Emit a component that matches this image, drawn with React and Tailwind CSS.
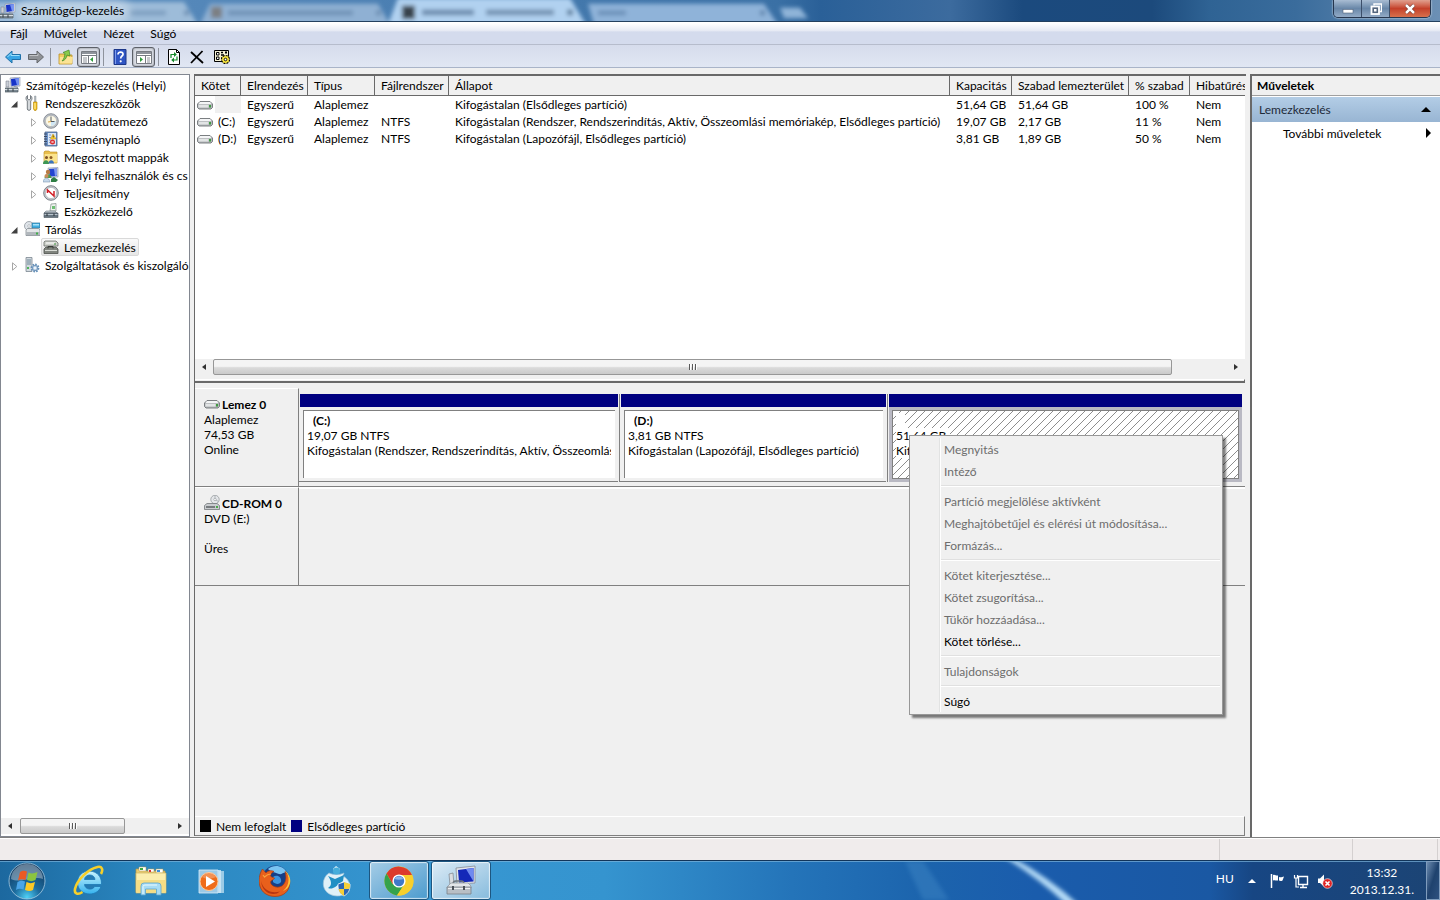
import clsx from 'clsx';

const menus = ['Fájl', 'Művelet', 'Nézet', 'Súgó'];

const tree = [
  { label: 'Számítógép-kezelés (Helyi)', level: 0, icon: ComputerIcon },
  { label: 'Rendszereszközök', level: 1, icon: ToolsIcon, state: 'open' },
  { label: 'Feladatütemező', level: 2, icon: ClockIcon, state: 'closed' },
  { label: 'Eseménynapló', level: 2, icon: EventLogIcon, state: 'closed' },
  { label: 'Megosztott mappák', level: 2, icon: SharedFolderIcon, state: 'closed' },
  { label: 'Helyi felhasználók és cs', level: 2, icon: UsersIcon, state: 'closed' },
  { label: 'Teljesítmény', level: 2, icon: PerformanceIcon, state: 'closed' },
  { label: 'Eszközkezelő', level: 2, icon: DeviceIcon },
  { label: 'Tárolás', level: 1, icon: StorageIcon, state: 'open' },
  { label: 'Lemezkezelés', level: 2, icon: DiskMgmtIcon, selected: true },
  { label: 'Szolgáltatások és kiszolgáló', level: 1, icon: ServicesIcon, state: 'closed' },
];

const columns = [
  { label: 'Kötet', width: 'w-[46px]' },
  { label: 'Elrendezés', width: 'w-[67px]' },
  { label: 'Típus', width: 'w-[67px]' },
  { label: 'Fájlrendszer', width: 'w-[74px]' },
  { label: 'Állapot', width: 'w-[501px]' },
  { label: 'Kapacitás', width: 'w-[62px]' },
  { label: 'Szabad lemezterület', width: 'w-[117px]' },
  { label: '% szabad', width: 'w-[61px]' },
  { label: 'Hibatűrés', width: '' },
];

const volumes = [
  ['', 'Egyszerű', 'Alaplemez', '', 'Kifogástalan (Elsődleges partíció)', '51,64 GB', '51,64 GB', '100 %', 'Nem'],
  ['(C:)', 'Egyszerű', 'Alaplemez', 'NTFS', 'Kifogástalan (Rendszer, Rendszerindítás, Aktív, Összeomlási memóriakép, Elsődleges partíció)', '19,07 GB', '2,17 GB', '11 %', 'Nem'],
  ['(D:)', 'Egyszerű', 'Alaplemez', 'NTFS', 'Kifogástalan (Lapozófájl, Elsődleges partíció)', '3,81 GB', '1,89 GB', '50 %', 'Nem'],
];

const contextMenu = [
  [{ label: 'Megnyitás' }, { label: 'Intéző' }],
  [
    { label: 'Partíció megjelölése aktívként' },
    { label: 'Meghajtóbetűjel és elérési út módosítása...' },
    { label: 'Formázás...' },
  ],
  [
    { label: 'Kötet kiterjesztése...' },
    { label: 'Kötet zsugorítása...' },
    { label: 'Tükör hozzáadása...' },
    { label: 'Kötet törlése...', enabled: true },
  ],
  [{ label: 'Tulajdonságok' }],
  [{ label: 'Súgó', enabled: true }],
];

const taskbarApps = [
  { name: 'Internet Explorer', icon: ExplorerLogo },
  { name: 'Windows Intéző', icon: FolderLogo },
  { name: 'Media Player', icon: MediaLogo },
  { name: 'Firefox', icon: FirefoxLogo },
  { name: 'Messenger', icon: MessengerLogo },
  { name: 'Chrome', icon: ChromeLogo, open: true },
  { name: 'Számítógép-kezelés', icon: ManagementLogo, open: true, active: true },
];

/* ---------- small icons ---------- */

function ComputerIcon() {
  return (
    <svg className="h-4 w-4 shrink-0" viewBox="0 0 16 16">
      <path d="M5 1l10-1v9l-9 1z" fill="#d8dce4" stroke="#8b94a6" strokeWidth=".6" />
      <path d="M6 2l8-1v7l-7.500 1z" fill="#1733c8" />
      <path d="M10 1.500l4-.5v7l-2 .3z" fill="#6f8df0" />
      <path d="M1 4h3v6H1z" fill="#c9ced6" stroke="#7d8590" strokeWidth=".6" />
      <path d="M0 11h13v4H0z" fill="#7d8a94" stroke="#4f5a63" strokeWidth=".7" />
      <path d="M0 12.500h13" stroke="#d5dce1" />
      <path d="M3 11.500v3M8 11.500v3" stroke="#343c42" />
      <path d="M9 9.500l4 1" stroke="#8b94a6" />
    </svg>
  );
}

function ToolsIcon() {
  return (
    <svg className="h-4 w-4 shrink-0" viewBox="0 0 16 16">
      <path d="M3.500.5v3.500l1.500 1 1.500-1V.5c2 1.200 2 4 .2 5.500v8c0 1.800-3.400 1.800-3.400 0V6C1.500 4.500 1.500 1.700 3.500.5z" fill="#d5d9dc" stroke="#6b7278" strokeWidth=".9" />
      <path d="M10.500 1h1.500v6h-1.500z" fill="#b5bcc2" stroke="#7c8388" strokeWidth=".4" />
      <path d="M9.500 7h3.500v7l-1 1.500h-1.500l-1-1.500z" fill="#f2bd19" stroke="#b48306" strokeWidth=".6" />
      <path d="M11 8v6" stroke="#fff3b0" />
    </svg>
  );
}

function ClockIcon() {
  return (
    <svg className="h-4 w-4 shrink-0" viewBox="0 0 16 16">
      <circle cx="8" cy="8" r="7.300" fill="#bcc1c8" stroke="#777d85" strokeWidth=".8" />
      <circle cx="8" cy="8" r="5.600" fill="#fbf7e4" stroke="#9ba1a8" strokeWidth=".5" />
      <path d="M8 8h5A5 5 0 0 1 8 13z" fill="#cfe6f5" />
      <path d="M8 3.500V8.500H11.500" fill="none" stroke="#555b62" />
      <path d="M8 8.500L5 9" stroke="#d9a84a" />
    </svg>
  );
}

function EventLogIcon() {
  return (
    <svg className="h-4 w-4 shrink-0" viewBox="0 0 16 16">
      <path d="M2 1h12v14H2z" fill="#6d93c9" stroke="#4b6288" strokeWidth=".8" />
      <path d="M5 2h8v12H5z" fill="#dbe6f5" />
      <path d="M6 4h2M6 6.500h2M6 9h2M6 11.500h2" stroke="#7c9ccc" />
      <path d="M1 3h3M1 5.500h3M1 8h3M1 10.500h3M1 13h3" stroke="#3b4b66" />
      <path d="M10 3l3 5H7.500z" fill="#ffd83b" stroke="#c18e05" strokeWidth=".5" />
      <path d="M10.200 4.500v2" stroke="#5d4200" />
      <circle cx="9.500" cy="11" r="2.500" fill="#dd2e32" />
      <path d="M8.500 10l2 2m0-2l-2 2" stroke="#fff" strokeWidth=".7" />
    </svg>
  );
}

function SharedFolderIcon() {
  return (
    <svg className="h-4 w-4 shrink-0" viewBox="0 0 16 16">
      <path d="M1 3l1-1h4l1 1h7v11H1z" fill="#e9bf4e" stroke="#b98b1e" strokeWidth=".6" />
      <path d="M1.500 5h12.500v8.500H1.500z" fill="#fbe38d" />
      <circle cx="3.500" cy="8.500" r="1.500" fill="#7d4f22" />
      <circle cx="8" cy="8.500" r="1.500" fill="#8b5a26" />
      <path d="M0 15c0-5 6-5 6 0z" fill="#3d9654" />
      <path d="M5.500 14.500c0-4.500 5.500-4.500 5.500 0z" fill="#3b74be" />
    </svg>
  );
}

function UsersIcon() {
  return (
    <svg className="h-4 w-4 shrink-0" viewBox="0 0 16 16">
      <path d="M5 1l10-.5V10l-9 .5z" fill="#d5dae3" stroke="#8590a5" strokeWidth=".6" />
      <path d="M6 2l8-.5V9l-7.500.5z" fill="#2445d0" />
      <path d="M11 2l3-.5v7l-2 .5z" fill="#7f98f0" />
      <circle cx="5" cy="5" r="2.200" fill="#b77a43" />
      <path d="M1.500 11c0-5 7-5 7 0z" fill="#4f9a4c" />
      <circle cx="3.500" cy="9" r="2" fill="#c98c58" />
      <path d="M0 15c0-5 7-5 7 0z" fill="#c5d8ea" stroke="#6d8aa7" strokeWidth=".5" />
      <path d="M8 12l3-2 4 3-2 2H8z" fill="#2f7e45" />
    </svg>
  );
}

function PerformanceIcon() {
  return (
    <svg className="h-4 w-4 shrink-0" viewBox="0 0 16 16">
      <circle cx="8" cy="8" r="7.300" fill="#c9cdd2" stroke="#6f767e" strokeWidth=".9" />
      <circle cx="8" cy="8" r="5.600" fill="#fff" stroke="#989ea5" strokeWidth=".5" />
      <path d="M4.500 8V5l6.500 6V6" fill="none" stroke="#d11f27" strokeWidth="1.500" />
      <path d="M5 5l5.500 5.500" stroke="#d11f27" strokeWidth=".8" />
    </svg>
  );
}

function DeviceIcon() {
  return (
    <svg className="h-4 w-4 shrink-0" viewBox="0 0 16 16">
      <path d="M8 1l5-.5V8H7z" fill="#eef2ee" stroke="#7e8d86" strokeWidth=".7" />
      <path d="M9 3h3v3H9z" fill="#6fbf74" />
      <path d="M3 8h9l2 2H1z" fill="#c4ccd3" stroke="#6f7982" strokeWidth=".6" />
      <path d="M1 10h14v4.500H1z" fill="#66747f" stroke="#46525b" strokeWidth=".6" />
      <path d="M1.500 11.500h13" stroke="#b9c4cc" />
      <path d="M4 10.500v2.500M11 10.500v2.500" stroke="#272f35" />
    </svg>
  );
}

function StorageIcon() {
  return (
    <svg className="h-4 w-4 shrink-0" viewBox="0 0 16 16">
      <circle cx="5" cy="5" r="4.500" fill="#dfe4e9" stroke="#828a92" strokeWidth=".7" />
      <circle cx="5" cy="5" r="1.300" fill="#fff" stroke="#8b939b" strokeWidth=".5" />
      <path d="M8 2h8v5H8z" fill="#42aee0" stroke="#29749b" strokeWidth=".7" />
      <path d="M9 3h6v1.500H9z" fill="#a7e2fa" />
      <path d="M2 9l1.500-1.500h11L16 9v5.500H2z" fill="#e3e6e8" stroke="#767e85" strokeWidth=".7" />
      <path d="M2 11h14v3H2z" fill="#b1b7bc" />
      <path d="M12 11.500h2v2h-2z" fill="#3fae49" />
    </svg>
  );
}

function DiskMgmtIcon() {
  return (
    <svg className="h-4 w-4 shrink-0" viewBox="0 0 16 16">
      <path d="M2 2h11l2 2v3H1V3z" fill="#cfd2cc" stroke="#6b6f69" strokeWidth=".8" />
      <path d="M3 4h9" stroke="#fff" />
      <path d="M11 5h2" stroke="#3d8f3d" />
      <path d="M3 8h10l2 2v4.500H1V10z" fill="#80847e" stroke="#4c504b" strokeWidth=".8" />
      <path d="M2 11.500h12" stroke="#d9dcd6" />
      <path d="M5 9.500v-2h5v2" fill="none" stroke="#393c38" />
    </svg>
  );
}

function ServicesIcon() {
  return (
    <svg className="h-4 w-4 shrink-0" viewBox="0 0 16 16">
      <path d="M2 .5h6v14H2z" fill="#d3dae0" stroke="#7b8790" strokeWidth=".8" />
      <path d="M3 3h4M3 5h4M3 7h4" stroke="#6d8797" />
      <path d="M3 10h2v2H3z" fill="#4fb35b" />
      <circle cx="11" cy="11" r="3.500" fill="#dbe8f4" stroke="#6590b8" strokeWidth="1.800" strokeDasharray="1.600 1.100" />
      <circle cx="11" cy="11" r="2.700" fill="#b9d0e6" stroke="#5a83aa" strokeWidth=".7" />
      <circle cx="11" cy="11" r="1" fill="#fff" />
    </svg>
  );
}

function DriveIcon() {
  return (
    <svg className="h-4 w-4 shrink-0" viewBox="0 0 16 16">
      <path d="M3 4.500h10l2.500 2.500v3.500L14 12H2L.5 10.500V7z" fill="#b4b7ba" stroke="#707477" strokeWidth=".9" />
      <path d="M3 5h10l1.500 2h-13z" fill="#f4f5f6" />
      <path d="M1.500 7.800h10v2.700h-10z" fill="#e2e4e5" />
      <path d="M12 8h2v2.500h-2z" fill="#3f9a40" />
    </svg>
  );
}

function CdDriveIcon() {
  return (
    <svg className="h-4 w-4 shrink-0" viewBox="0 0 16 16">
      <circle cx="11" cy="4.500" r="4.200" fill="#e5e7ea" stroke="#8b9094" strokeWidth=".7" />
      <circle cx="11" cy="4.500" r="1.200" fill="#fff" stroke="#8b9094" strokeWidth=".6" />
      <path d="M11 .5v3M12 5l3 2" stroke="#aeb4b8" />
      <path d="M3 8.500h10l2.500 2v4H.5v-4z" fill="#c9cccf" stroke="#74787b" strokeWidth=".8" />
      <path d="M2 12h9" stroke="#5d6265" strokeWidth="1.500" />
      <path d="M12 11h2v2h-2z" fill="#49a84a" />
    </svg>
  );
}

function Triangle({ dir, className }) {
  const points = {
    left: '6,1 6,9 2,5',
    right: '3,0 3,10 8,5',
    up: '0,7 10,7 5,2',
  };
  return (
    <svg className={clsx('h-[10px] w-[10px] shrink-0', className)} viewBox="0 0 10 10">
      <polygon points={points[dir]} fill="currentColor" />
    </svg>
  );
}

function ScrollArrow({ dir }) {
  return (
    <svg className="h-[10px] w-[10px]" viewBox="0 0 10 10">
      <polygon points={dir === 'left' ? '7,2 7,8 3,5' : '3,2 3,8 7,5'} fill="#303030" />
    </svg>
  );
}

/* ---------- title bar ---------- */

function CaptionButtons() {
  return (
    <div className="mr-[9px] flex h-[18px] overflow-hidden rounded-b-[5px] border border-t-0 border-[#26364e] shadow-[0_0_2px_#ffffff]">
      <button aria-label="Kis méret" className="flex w-7 items-center justify-center border-r border-[#3c4f6a] bg-linear-to-b from-[#a9bdd3] via-[#6987a8] to-[#93abc6]">
        <svg className="h-3 w-3" viewBox="0 0 12 12">
          <rect x="1" y="6.500" width="10" height="3.500" fill="#fff" stroke="#53657d" strokeWidth=".6" />
        </svg>
      </button>
      <button aria-label="Előző méret" className="flex w-7 items-center justify-center border-r border-[#3c4f6a] bg-linear-to-b from-[#a9bdd3] via-[#6987a8] to-[#93abc6]">
        <svg className="h-3 w-3" viewBox="0 0 12 12">
          <path d="M4 2.500V1h7.500v7.500H10" fill="none" stroke="#fff" strokeWidth="1.400" />
          <rect x="1.500" y="3.500" width="7.500" height="7.500" fill="#53657d" stroke="#fff" strokeWidth="1.800" />
          <rect x="4" y="6" width="2.500" height="2.500" fill="#fff" />
        </svg>
      </button>
      <button aria-label="Bezárás" className="flex w-10 items-center justify-center bg-linear-to-b from-[#e0a08f] via-[#c4402a] to-[#d8704c]">
        <svg className="h-3 w-3" viewBox="0 0 12 12">
          <path d="M2 2l8 8M10 2l-8 8" stroke="#5c2018" strokeWidth="3.600" />
          <path d="M2 2l8 8M10 2l-8 8" stroke="#fff" strokeWidth="2.600" />
        </svg>
      </button>
    </div>
  );
}

function GlassBackdrop() {
  return (
    <svg className="absolute inset-0 h-full w-full" viewBox="0 0 1440 22" preserveAspectRatio="none">
      <defs>
        <linearGradient id="sky" x1="0" x2="1" y1="0" y2="0">
          <stop offset="0" stopColor="#5d8fc0" />
          <stop offset=".54" stopColor="#3a70a5" />
          <stop offset=".57" stopColor="#2a6098" />
          <stop offset=".66" stopColor="#3c6b9e" />
          <stop offset=".71" stopColor="#1b4a7e" />
          <stop offset=".8" stopColor="#1c4a7c" />
          <stop offset=".84" stopColor="#2f6394" />
          <stop offset=".9" stopColor="#3a6c9c" />
          <stop offset="1" stopColor="#6c90b5" />
        </linearGradient>
        <filter id="haze" x="-5%" y="-50%" width="110%" height="200%">
          <feGaussianBlur stdDeviation="2" />
        </filter>
      </defs>
      <rect width="1440" height="22" fill="url(#sky)" />
      <g filter="url(#haze)">
        <path d="M-10 2H184l14 24H-10z" fill="#9dbcd9" />
        <path d="M210 4h168l12 22H200z" fill="#8fb0d3" />
        <path d="M398-2h172l16 28H388z" fill="#b1d1f0" />
        <path d="M588 4h176l14 22H594z" fill="#8fb3d9" />
        <path d="M780 8h20l8 11h-24z" fill="#8fb4d8" />
        <rect x="211" y="7" width="11" height="12" fill="#7c7f83" />
        <rect x="402" y="6" width="13" height="14" fill="#38424c" />
        <rect x="130" y="11" width="36" height="5" fill="#7d9dbf" />
        <rect x="228" y="11" width="125" height="5" fill="#6f91b5" />
        <rect x="422" y="10" width="52" height="6" fill="#6d8cad" />
        <rect x="486" y="10" width="68" height="6" fill="#7593b2" />
        <rect x="598" y="11" width="28" height="5" fill="#6c90b8" />
        <rect x="184" y="11" width="5" height="5" fill="#6a8cb0" />
        <rect x="376" y="11" width="5" height="5" fill="#6a8cb0" />
        <rect x="567" y="10" width="6" height="6" fill="#5f7f9f" />
        <rect x="760" y="11" width="5" height="5" fill="#5f83ab" />
      </g>
    </svg>
  );
}

function TitleBar() {
  return (
    <header className="relative flex h-[22px] shrink-0 items-start justify-between overflow-hidden border-b border-[#23405f]">
      <GlassBackdrop />
      <div className="relative flex items-center gap-[5px] pt-[2px]">
        <ComputerIcon />
        <h1 className="rounded-full bg-white/30 shadow-[0_0_8px_6px_rgba(255,255,255,0.3)]">Számítógép-kezelés</h1>
      </div>
      <div className="relative">
        <CaptionButtons />
      </div>
    </header>
  );
}

/* ---------- menu and toolbar ---------- */

function MenuBar() {
  return (
    <nav className="flex h-[23px] shrink-0 items-center gap-1 border-b border-[#b6bccc] bg-linear-to-b from-white from-5% via-[#e6eaf4] via-40% to-[#d4dbed] to-45% pl-1">
      {menus.map((menu) => (
        <button key={menu} className="px-[6px]">
          {menu}
        </button>
      ))}
    </nav>
  );
}

function ToolButton({ label, pressed, children }) {
  return (
    <button
      aria-label={label}
      className={clsx(
        'flex h-5 w-[23px] items-center justify-center',
        pressed && 'rounded-[3px] border border-[#5d6169] bg-[#d9dce4] shadow-[inset_0_0_2px_#6b7078]'
      )}
    >
      {children}
    </button>
  );
}

function ToolSeparator() {
  return <div className="mx-[3px] h-[18px] w-px bg-[#8e939d]" />;
}

function Toolbar() {
  return (
    <div className="flex h-[23px] shrink-0 items-center border-b border-[#a9b4c8] bg-linear-to-b from-[#d6dcec] to-[#e1e7f3] pt-px pl-px">
      <ToolButton label="Vissza">
        <svg className="h-4 w-4" viewBox="0 0 16 16">
          <path d="M.5 8L7 2v3.500h8.500v5H7V14z" fill="#39a5e4" stroke="#2070a8" />
          <path d="M2.500 8L6 4.500v2h8.500" fill="none" stroke="#9be0fb" />
        </svg>
      </ToolButton>
      <ToolButton label="Előre">
        <svg className="h-4 w-4" viewBox="0 0 16 16">
          <path d="M15.500 8L9 2v3.500H.5v5H9V14z" fill="#8f9296" stroke="#64676b" />
          <path d="M1.500 6.500H10v-2" fill="none" stroke="#c2c4c7" />
        </svg>
      </ToolButton>
      <ToolSeparator />
      <ToolButton label="Fel egy szinttel">
        <svg className="h-4 w-4" viewBox="0 0 16 16">
          <path d="M1 5h5l1 1h7v9H1z" fill="#f3cd63" stroke="#b98f27" strokeWidth=".8" />
          <path d="M2 8h13l-1 6.500H1.500z" fill="#fbe396" />
          <path d="M4 12c3-.5 4.500-3 5-6L12 7l-1-6-6 2.500 2 1C6.500 8 6 10 4 12z" fill="#8acb4c" stroke="#3f8a24" strokeWidth=".7" />
        </svg>
      </ToolButton>
      <ToolButton label="Konzolfa megjelenítése" pressed>
        <svg className="h-4 w-4" viewBox="0 0 16 16">
          <path d="M.5 2.500h15v12H.5z" fill="#fff" stroke="#777b82" />
          <path d="M1 4h14" stroke="#8e939b" strokeWidth="2" />
          <path d="M1 6.500h14M7.500 7v7" stroke="#777b82" />
          <path d="M2 9h4M2 11h4M2 13h4" stroke="#8e939b" />
          <path d="M12 8v5L9 10.500z" fill="#2f9a3c" />
        </svg>
      </ToolButton>
      <ToolSeparator />
      <div className="w-px" />
      <ToolButton label="Súgó">
        <svg className="h-4 w-4" viewBox="0 0 16 16">
          <path d="M2 .5h12v15H2z" fill="#2f55c4" stroke="#1c3789" />
          <path d="M3.500 1v14" stroke="#7d9bea" />
          <path d="M6 5.500c0-3.500 5.500-3 5 0-.3 1.700-2.300 1.500-2.300 4" fill="none" stroke="#fff" strokeWidth="1.700" />
          <circle cx="8.700" cy="12.300" r="1.100" fill="#fff" />
        </svg>
      </ToolButton>
      <div className="w-px" />
      <ToolButton label="Műveletek ablaktábla" pressed>
        <svg className="h-4 w-4" viewBox="0 0 16 16">
          <path d="M.5 2.500h15v12H.5z" fill="#fff" stroke="#777b82" />
          <path d="M1 4h14" stroke="#8e939b" strokeWidth="2" />
          <path d="M1 6.500h14M9.500 7v7" stroke="#777b82" />
          <path d="M11 9h3M11 11h3M11 13h3" stroke="#8e939b" />
          <path d="M4 8v5l3-2.500z" fill="#2f9a3c" />
        </svg>
      </ToolButton>
      <ToolSeparator />
      <ToolButton label="Frissítés">
        <svg className="h-4 w-4" viewBox="0 0 16 16">
          <path d="M2.500.5h8l3 3v12h-11z" fill="#fff" stroke="#000" />
          <path d="M10.500.5v3h3" fill="none" stroke="#000" />
          <path d="M5 9V5.500h4M11 7.500V11H7" fill="none" stroke="#178a2b" strokeWidth="1.200" />
          <path d="M8 3v5l2.800-2.500zM8 8.500v5L5.200 11z" fill="#178a2b" />
        </svg>
      </ToolButton>
      <ToolButton label="Törlés">
        <svg className="h-4 w-4" viewBox="0 0 16 16">
          <path d="M2 3l12 11" stroke="#000" strokeWidth="1.800" />
          <path d="M13.500 2L2 14" stroke="#000" strokeWidth="1.800" />
        </svg>
      </ToolButton>
      <ToolButton label="Tulajdonságok">
        <svg className="ml-1 h-4 w-4" viewBox="0 0 16 16">
          <path d="M.5 1.500h14v11H.5z" fill="#f4f1d5" stroke="#000" />
          <path d="M2.500 3.500h2.500v2.500h-2.500zM2.500 8h2.500v2.500h-2.500z" fill="#fff" stroke="#000" />
          <path d="M7 3.500h2M7 6h3M7 9h2" stroke="#000" strokeWidth="1.500" />
          <path d="M11 3.500h2" stroke="#000" strokeWidth="2" />
          <circle cx="11.500" cy="10.500" r="4" fill="#f5e23c" stroke="#000" strokeWidth="1.200" strokeDasharray="2 1.100" />
          <circle cx="11.500" cy="10.500" r="3" fill="#f5e23c" />
          <circle cx="11.500" cy="10.500" r="1.300" fill="#fff" stroke="#000" strokeWidth=".9" />
        </svg>
      </ToolButton>
    </div>
  );
}

/* ---------- panes ---------- */

function ScrollBar({ thumb }) {
  return (
    <div className="flex h-4 shrink-0 items-center bg-[#f0f0f0]">
      <button aria-label="Görgetés balra" className="flex w-[18px] justify-center">
        <ScrollArrow dir="left" />
      </button>
      <div className="flex-1">
        <div className={clsx('flex h-4 items-center justify-center gap-px rounded-[2px] border border-[#979797] bg-linear-to-b from-[#f4f4f4] from-45% via-[#dadada] via-55% to-[#cacaca]', thumb)}>
          <span className="h-[6px] w-[2px] border-r border-white bg-[#5a5a5a]" />
          <span className="h-[6px] w-[2px] border-r border-white bg-[#5a5a5a]" />
          <span className="h-[6px] w-[2px] border-r border-white bg-[#5a5a5a]" />
        </div>
      </div>
      <button aria-label="Görgetés jobbra" className="flex w-[18px] justify-center">
        <ScrollArrow dir="right" />
      </button>
    </div>
  );
}

function TreeItem({ item }) {
  const Icon = item.icon;
  return (
    <li className={clsx('flex h-[18px] items-center', item.level === 0 && 'pl-[2px]', item.level === 1 && 'pl-[7px]', item.level === 2 && 'pl-[26px]')}>
      {item.level > 0 && (
        <span className="mr-[2px] flex w-3 shrink-0 justify-center">
          {item.state && (
            <svg className="mt-[2px] h-[9px] w-[7px]" viewBox="0 0 7 9">
              {item.state === 'open' ? (
                <path d="M6.500 1v6.500H0z" fill="#404040" />
              ) : (
                <path d="M1.500 .8l4.300 3.700-4.300 3.700z" fill="#fff" stroke="#a6a6a6" />
              )}
            </svg>
          )}
        </span>
      )}
      <button
        className={clsx(
          'flex h-[18px] items-center gap-[5px] rounded-[2px] border pr-[2px] pl-px whitespace-nowrap',
          item.selected ? 'border-[#d9d9d9] bg-linear-to-b from-[#fafafa] to-[#e6e6e6]' : 'border-transparent'
        )}
      >
        <Icon />
        {item.label}
      </button>
    </li>
  );
}

function TreePane() {
  return (
    <aside className="flex w-[190px] shrink-0 flex-col border border-[#828790] bg-white pb-[2px]">
      <ul className="flex-1 overflow-hidden pt-px">
        {tree.map((item) => (
          <TreeItem key={item.label} item={item} />
        ))}
      </ul>
      <ScrollBar thumb="w-[105px] ml-px" />
    </aside>
  );
}

function VolumeList() {
  return (
    <div className="flex h-[283px] shrink-0 flex-col overflow-hidden bg-white">
      <table className="w-full table-fixed border-separate border-spacing-0 text-left whitespace-nowrap">
        <thead>
          <tr className="h-5">
            {columns.map((col) => (
              <th
                key={col.label}
                scope="col"
                className={clsx('overflow-hidden border-r border-b border-[#696969] bg-[#f0f0f0] p-0 pl-[6px] font-normal last:border-r-0', col.width)}
              >
                {col.label}
              </th>
            ))}
          </tr>
        </thead>
        <tbody>
          {volumes.map((row, idx) => (
            <tr key={idx} className="h-[17px]">
              {row.map((cell, i) =>
                i === 0 ? (
                  <td key={i} className="p-0">
                    <span className="flex h-[17px] items-center pl-[2px]">
                      <DriveIcon />
                      <span className={clsx('ml-[2px] h-[17px] flex-1 pl-[3px]', !cell && 'bg-[#f0f0f0]')}>{cell}</span>
                    </span>
                  </td>
                ) : (
                  <td key={i} className="overflow-hidden p-0 pl-[6px]">
                    {cell}
                  </td>
                )
              )}
            </tr>
          ))}
        </tbody>
      </table>
    </div>
  );
}

function DiskLabel({ icon: Icon, name, lines }) {
  return (
    <div className="w-[104px] shrink-0 border-t border-r border-t-white border-r-[#808080] pt-[7px] pl-[9px] leading-[15px]">
      <h2 className="flex h-4 items-center gap-[2px] font-bold whitespace-nowrap">
        <Icon />
        {name}
      </h2>
      {lines.map((line, i) => (
        <p key={i} className="h-[15px]">
          {line}
        </p>
      ))}
    </div>
  );
}

function Partition({ name, size, status }) {
  return (
    <div className="flex min-w-0 flex-col border-r border-[#808080] pr-px">
      <div className="ml-px h-[13px] bg-[#000080]" />
      <div className="flex-1 border-b border-[#808080] p-[3px] pl-1">
        <div className="h-full overflow-hidden border-t border-l border-[#808080] bg-white pt-[2px] pl-[3px] leading-[15px] whitespace-nowrap">
          <p className="pl-[6px] font-bold">{name}</p>
          <p>{size}</p>
          <p className="mr-1 overflow-hidden">{status}</p>
        </div>
      </div>
    </div>
  );
}

function SelectedPartition() {
  return (
    <div className="relative flex min-w-0 flex-col">
      <div className="ml-px h-[13px] bg-[#000080]" />
      <div className="ml-px flex-1 bg-[#b9b9c3] p-[3px]">
        <div className="relative h-full overflow-hidden border border-[#808080] bg-white pt-[2px] pl-[3px] leading-[15px] whitespace-nowrap">
          <svg className="absolute inset-0 h-full w-full">
            <defs>
              <pattern id="hatch" width="8" height="8" patternUnits="userSpaceOnUse">
                <path d="M-1 9L9 -1M-1 1L1 -1M7 9L9 7" stroke="#707070" strokeWidth=".8" />
              </pattern>
            </defs>
            <rect width="100%" height="100%" fill="url(#hatch)" />
          </svg>
          <p className="relative h-[15px] w-[9px] bg-white" />
          <p className="relative w-fit bg-white pr-1">51,64 GB</p>
          <p className="relative w-fit bg-white">Kifogástalan (Elsődleges partíció)</p>
        </div>
      </div>
      <ContextMenu />
    </div>
  );
}

function ContextMenu() {
  return (
    <div role="menu" className="absolute top-[41px] left-[21px] z-10 w-[314px] border border-[#979797] bg-[#f0f0f0] p-[2px] shadow-[3px_3px_2px_rgba(0,0,0,0.5)]">
      <div className="relative">
        <div className="absolute inset-y-0 left-[27px] w-[2px] border-l border-[#e2e3e3] bg-white" />
        {contextMenu.map((group, i) => (
          <div key={i}>
            {i > 0 && <div className="my-[3px] ml-7 h-[2px] border-t border-[#e0e0e0] bg-white" />}
            {group.map((item) => (
              <button
                key={item.label}
                role="menuitem"
                disabled={!item.enabled}
                className={clsx('relative block h-[22px] w-full pl-8 text-left', item.enabled ? 'text-black' : 'text-[#6d6d6d]')}
              >
                {item.label}
              </button>
            ))}
          </div>
        ))}
      </div>
    </div>
  );
}

function DiskView() {
  return (
    <div className="flex flex-1 flex-col bg-[#f0f0f0]">
      <div className="mt-[5px] flex h-[99px] border-b border-[#808080]">
        <DiskLabel icon={DriveIcon} name="Lemez 0" lines={['Alaplemez', '74,53 GB', 'Online']} />
        <div className="grid min-w-0 flex-1 grid-cols-[321fr_268fr_354fr] pt-[6px] pr-[3px] pb-1">
          <Partition name="(C:)" size="19,07 GB NTFS" status="Kifogástalan (Rendszer, Rendszerindítás, Aktív, Összeomlás" />
          <Partition name="(D:)" size="3,81 GB NTFS" status="Kifogástalan (Lapozófájl, Elsődleges partíció)" />
          <SelectedPartition />
        </div>
      </div>
      <div className="flex h-[99px] border-b border-[#808080]">
        <DiskLabel icon={CdDriveIcon} name="CD-ROM 0" lines={['DVD (E:)', '', 'Üres']} />
        <div className="flex-1 border-t-2 border-white" />
      </div>
      <div className="mt-auto flex h-5 items-center gap-[5px] border-t border-r border-b border-t-white border-r-[#808080] border-b-[#808080] pl-[5px]">
        <span className="h-3 w-[11px] bg-black" />
        <span>Nem lefoglalt</span>
        <span className="h-3 w-[11px] bg-[#000080]" />
        <span>Elsődleges partíció</span>
      </div>
    </div>
  );
}

function ActionsPane() {
  return (
    <aside className="w-[190px] shrink-0 border-t-2 border-l-2 border-[#696969] bg-white">
      <h2 className="flex h-5 items-center border-b border-[#a0a0a0] bg-[#f0f0f0] pl-[5px] font-bold">Műveletek</h2>
      <button className="mt-px flex h-[25px] w-full items-center justify-between bg-linear-to-b from-[#b3cde6] to-[#98b5d3] pr-[9px] pl-[7px] text-[#1e2a3a]">
        Lemezkezelés
        <Triangle dir="up" className="text-black" />
      </button>
      <button className="mt-[2px] flex h-[18px] w-full items-center justify-between pr-[7px] pl-[31px]">
        További műveletek
        <Triangle dir="right" className="text-black" />
      </button>
    </aside>
  );
}

/* ---------- taskbar ---------- */

function StartOrb() {
  return (
    <svg className="h-[38px] w-[38px]" viewBox="0 0 38 38">
      <defs>
        <radialGradient id="orb" cx=".5" cy=".95" r=".9">
          <stop offset="0" stopColor="#4fd0f5" />
          <stop offset=".4" stopColor="#1c6c9f" />
          <stop offset="1" stopColor="#12395f" />
        </radialGradient>
      </defs>
      <circle cx="19" cy="19" r="18" fill="url(#orb)" stroke="#a8cbe2" strokeWidth=".8" />
      <path d="M3 17a16 15 0 0 1 32 0c-9-4-23 5-32 0z" fill="#fff" opacity=".35" />
      <path d="M12 10c3-2 4.500-1.500 7-.5L17.500 18c-3-1-5-1-7.500.5z" fill="#ea5a24" />
      <path d="M20.500 10.500c3 1.500 5.500 1 9-.5L27.500 18c-3 1.500-5.500 1.500-8.500 0z" fill="#8bc53f" />
      <path d="M9.500 20c3-1.500 5-1.500 7.500-.5L15.500 27.500c-3-1-5-1-7.500.5z" fill="#4aa5e8" />
      <path d="M18.500 20c3 1.500 5.500 1.500 8.500 0L25 28c-3 1.500-5 1-8 0z" fill="#fcc926" />
    </svg>
  );
}

function ExplorerLogo() {
  return (
    <svg className="h-8 w-8" viewBox="0 0 32 32">
      <defs>
        <linearGradient id="ie" x1="0" y1="0" x2="0" y2="1">
          <stop offset="0" stopColor="#c8f4ff" />
          <stop offset="1" stopColor="#35b2ee" />
        </linearGradient>
      </defs>
      <path d="M28.500 19.500H11.500c.5 5.500 8.500 6 10 2h6.500C24 33 4.500 31 4.500 17.500 4.500 2 29.500 2 28.500 19.500zM11.500 14.500h10.500c-.5-6-10-6-10.500 0z" fill="url(#ie)" fillRule="evenodd" stroke="#1d78b5" strokeWidth=".8" />
      <path d="M28 9c2.500-4.500 1-8-3.500-7C15 4 4 15 2 24c-1 6 4 5.500 7.500 3" fill="none" stroke="#f6cf2a" strokeWidth="2.600" />
    </svg>
  );
}

function FolderLogo() {
  return (
    <svg className="h-8 w-8" viewBox="0 0 32 32">
      <path d="M1 4h8l2 2h19v21H1z" fill="#e8cd75" stroke="#b69a45" strokeWidth=".7" />
      <path d="M4 2h7v4H4z" fill="#fff" stroke="#b69a45" strokeWidth=".5" />
      <path d="M5 3h3v2H5z" fill="#3da83d" />
      <path d="M13 4h6v3h-6zM21 4h7v4h-7z" fill="#fff" stroke="#b69a45" strokeWidth=".5" />
      <path d="M14 5h2v2h-2z" fill="#d33" />
      <path d="M22 5h3v2h-3z" fill="#3d8fd8" />
      <path d="M1 8h30v20H1z" fill="#fbeeae" stroke="#ceb562" strokeWidth=".7" />
      <path d="M1.500 15h29v12.500h-29z" fill="#f5dd84" />
      <path d="M6 30V21q0-3 3-3h14q3 0 3 3v9h-4.500v-6h-11v6z" fill="#a7dcf5" stroke="#5ba4cf" strokeWidth=".8" />
      <path d="M8 29V21.500q0-1.500 2-1.500h12" fill="none" stroke="#e9f9ff" />
    </svg>
  );
}

function MediaLogo() {
  return (
    <svg className="h-8 w-8" viewBox="0 0 32 32">
      <path d="M22 6h5v22h-5z" fill="#b8dbef" opacity=".8" />
      <path d="M19 5h5v23h-5z" fill="#d2e9f6" opacity=".8" />
      <path d="M2 5h19v23H2z" fill="#9bc9e6" stroke="#d9eef9" strokeWidth=".8" />
      <circle cx="12" cy="16.500" r="9" fill="#ef6c1a" stroke="#ffc896" />
      <path d="M5 12c4-6 11-6 14 0-5 2-9 3-14 0z" fill="#fff" opacity=".25" />
      <path d="M9 11l9 5.500L9 22z" fill="#fff" />
    </svg>
  );
}

function FirefoxLogo() {
  return (
    <svg className="h-8 w-8" viewBox="0 0 32 32">
      <circle cx="16.500" cy="14" r="13.500" fill="#173f86" />
      <path d="M9 4C14-1 25 0 28 8c-3-2-5 2-8 1-4-2-7-1-11-5z" fill="#79c4f2" />
      <path d="M14 12c4-3 9 0 8 5-2 3-6 2-8 0z" fill="#3b94df" />
      <path d="M3.500 4l3.500 4c2-2.500 5-3 8-1.500-3 1.500-4.500 3.500-2.500 5.500l3 1c-.5 2-3.500 2-4 4 .5 5 8.500 7 12.500 3 3.500-3.500 3.500-8.500 2-13.500C33 12 34 31 16 31.500-1 31-3 14 3.500 4z" fill="#e8601c" stroke="#a93a10" strokeWidth=".7" />
      <path d="M26 5.500c5 6 5 15-2 20.500 8.500-3 10-14 2-20.500z" fill="#fcc63c" />
      <path d="M2 16c2 9 10 13 19 10.500-6 5.500-18 2-19-10.500z" fill="#b83512" />
      <path d="M4 10l1.500 2c2-2 3.500-3 6.500-3" fill="none" stroke="#f9a13e" strokeWidth="1.200" />
    </svg>
  );
}

function MessengerLogo() {
  return (
    <svg className="h-8 w-8" viewBox="0 0 32 32">
      <path d="M8 8c4 2 11 2 15 0l-1 3c12 7 7 20-6 20C0 30-1 14 8 8z" fill="#dff0f8" stroke="#9dc3d9" strokeWidth=".7" />
      <path d="M12 4l3-3 4 3-1 3h-5z" fill="#e9f6fc" />
      <circle cx="15.500" cy="6" r="3.600" fill="#45addb" />
      <path d="M7 11l7 3 9-4-1 6-4 3c-3 2-6 6-11 4 5-3 3-8 0-12z" fill="#218fc4" />
      <path d="M17 19l6-2 6 2c0 6-1 9-6 12-5-3-6-6-6-12z" fill="#2d66b5" stroke="#fff" strokeWidth=".7" />
      <path d="M23 17l6 2c0 2 0 4-1 5h-5zM23 24v7c-3-2-5-4-5.500-7z" fill="#f7cf38" />
    </svg>
  );
}

function ChromeLogo() {
  return (
    <svg className="h-8 w-8" viewBox="0 0 32 32">
      <circle cx="16" cy="16" r="14.500" fill="#f8cf2d" />
      <path d="M3.500 8.500A14.500 14.500 0 0 1 29 10H16l-6.500 9z" fill="#dc3b2d" />
      <path d="M3.500 8.500A14.500 14.500 0 0 0 14 30.400L21 20l-11.500-1z" fill="#35a24c" />
      <path d="M29 10H16l5.500 9L14 30.400C25 32 34 21 29 10z" fill="#f8cf2d" />
      <circle cx="16" cy="16" r="6.600" fill="#fff" />
      <circle cx="16" cy="16" r="5.200" fill="#3f79c9" />
      <path d="M11.500 14a5 5 0 0 1 9 0c-3 1-6 1-9 0z" fill="#8cb6ea" />
    </svg>
  );
}

function ManagementLogo() {
  return (
    <svg className="h-8 w-8" viewBox="0 0 32 32">
      <path d="M11 3l19-2v17l-18 1z" fill="#e3e6ea" stroke="#858c96" strokeWidth=".8" />
      <path d="M13 5l15.500-2v13.500L14 17.500z" fill="#1428b8" />
      <path d="M21 4l7.500-1v13.500z" fill="#6f8af0" />
      <path d="M4 9l4-1 1 12H5z" fill="#dadde1" stroke="#7b828b" strokeWidth=".7" />
      <path d="M20 18h5l1 4h-7z" fill="#b2b8c0" />
      <path d="M8 19q0-3 3-3h5q3 0 3 3" fill="none" stroke="#6e757d" strokeWidth="1.500" />
      <path d="M3 21l3-3h17l3 3v2H2z" fill="#e3e6e9" stroke="#8b929a" strokeWidth=".7" />
      <path d="M2 22h24v7H2z" fill="#b9bfc5" stroke="#7a8189" strokeWidth=".8" />
      <path d="M3 23.500h22" stroke="#eef0f2" />
      <path d="M7 21h2v4H7zM18 21h2v4h-2z" fill="#4a5057" />
    </svg>
  );
}

function Tray() {
  return (
    <div className="flex items-center text-white">
      <span className="mr-[13px] mb-1">HU</span>
      <button aria-label="Rejtett ikonok megjelenítése">
        <svg className="h-[10px] w-[10px]" viewBox="0 0 10 10">
          <polygon points="1,7 9,7 5,3" fill="#fff" />
        </svg>
      </button>
      <svg className="ml-3 h-4 w-4" viewBox="0 0 16 16">
        <path d="M2.500 1v14" stroke="#fff" strokeWidth="1.500" />
        <path d="M4 2c2-1 3 1 5 .500v5C7 8 6 6.500 4 7.500z" fill="#fff" />
        <path d="M10 4c2 .8 3 0 5-.500l-1.500 4c-1.500.8-2.500.5-3.500 0z" fill="#fff" />
      </svg>
      <svg className="ml-2 h-4 w-4" viewBox="0 0 16 16">
        <path d="M5.500 3.500h9v8h-9zM7 14.500h7M10 12v2" fill="none" stroke="#fff" strokeWidth="1.400" />
        <path d="M1.500 2v3h3V2M3 5v9h3" fill="none" stroke="#fff" strokeWidth="1.200" />
      </svg>
      <svg className="ml-2 h-4 w-4" viewBox="0 0 16 16">
        <path d="M1 5.500h2L7 1.500v12L3 10H1z" fill="#fff" />
        <circle cx="10.500" cy="10.500" r="4.800" fill="#e02424" stroke="#fff" strokeWidth=".6" />
        <path d="M8.500 8.500l4 4m0-4l-4 4" stroke="#fff" strokeWidth="1.600" />
      </svg>
      <time className="ml-[17px] text-center leading-[17px]">
        13:32
        <br />
        2013.12.31.
      </time>
      <button aria-label="Asztal megjelenítése" className="ml-3 h-[39px] w-[14px] border border-[#7f9cbd] bg-linear-to-br from-[#6d8cb0] via-[#1f426e] to-[#2e5280]" />
    </div>
  );
}

function Taskbar() {
  return (
    <footer className="relative flex h-10 shrink-0 items-center overflow-hidden border-t border-[#12355a]">
      {/* wallpaper light streaks under the glass */}
      <svg className="absolute inset-0 h-full w-full" viewBox="0 0 1440 40" preserveAspectRatio="none">
        <defs>
          <linearGradient id="glass" x1="0" x2="1" y1="0" y2="0">
            <stop offset="0" stopColor="#1c689f" />
            <stop offset=".1" stopColor="#2a86bf" />
            <stop offset=".3" stopColor="#3797d2" />
            <stop offset=".42" stopColor="#3594cf" />
            <stop offset=".55" stopColor="#2474b9" />
            <stop offset=".64" stopColor="#1c64ad" />
            <stop offset=".72" stopColor="#1a5cac" />
            <stop offset=".84" stopColor="#1a58a3" />
            <stop offset=".87" stopColor="#174683" />
            <stop offset="1" stopColor="#1c4474" />
          </linearGradient>
          <filter id="soft">
            <feGaussianBlur stdDeviation="2" />
          </filter>
        </defs>
        <rect width="1440" height="40" fill="url(#glass)" />
        <path d="M1004 -4h8q38 22 66 48h-12q-30-28-62-48z" fill="#b5dcf7" filter="url(#soft)" />
        <path d="M905 0h18l26 40h-26z" fill="#5fa6da" opacity=".25" filter="url(#soft)" />
        <rect y="0" width="1440" height="1" fill="#7db4dc" opacity=".7" />
      </svg>
      <button aria-label="Start" className="relative ml-2 flex w-[38px] justify-center">
        <StartOrb />
      </button>
      <div className="relative ml-[13px] flex gap-[2px]">
        {taskbarApps.map(({ name, icon: Icon, open, active }) => (
          <button
            key={name}
            aria-label={name}
            className={clsx(
              'flex h-[39px] w-[60px] items-center justify-center rounded-[3px] border',
              !open && 'border-transparent',
              open && 'border-[#1d5680] shadow-[inset_0_0_1px_1px_rgba(255,255,255,0.7)]',
              open && !active && 'bg-linear-to-br from-[#a5cde6] to-[#4a9bce]',
              active && 'bg-linear-to-br from-[#dcebf5] to-[#86bbdd]'
            )}
          >
            <Icon />
          </button>
        ))}
      </div>
      <div className="relative ml-auto">
        <Tray />
      </div>
    </footer>
  );
}

export default function App() {
  return (
    <div className="flex h-screen min-h-[640px] flex-col overflow-hidden bg-[#f0f0f0] font-['Lato','Open_Sans',sans-serif] text-[12px] leading-[17px] text-black [font-variant-ligatures:none]">
      <TitleBar />
      <MenuBar />
      <Toolbar />
      <main className="flex min-h-0 flex-1 gap-1 border-b border-[#808080] pt-[6px]">
        <TreePane />
        <section className="mb-px flex min-w-0 flex-1 flex-col border-t-2 border-l border-[#696969] pr-px">
          <VolumeList />
          <ScrollBar thumb="w-[959px] max-w-full" />
          <div className="mt-1 h-[4px] shrink-0 border-t border-r border-b-2 border-t-white border-r-[#696969] border-b-[#696969]" />
          <DiskView />
        </section>
        <ActionsPane />
      </main>
      <div className="flex h-[22px] shrink-0 justify-end border-t border-white bg-[#f0ecec] pr-[2px]">
        <div className="w-[133px] border-l border-[#d4d0d0]" />
        <div className="w-[86px] border-x border-[#d4d0d0]" />
      </div>
      <Taskbar />
    </div>
  );
}
